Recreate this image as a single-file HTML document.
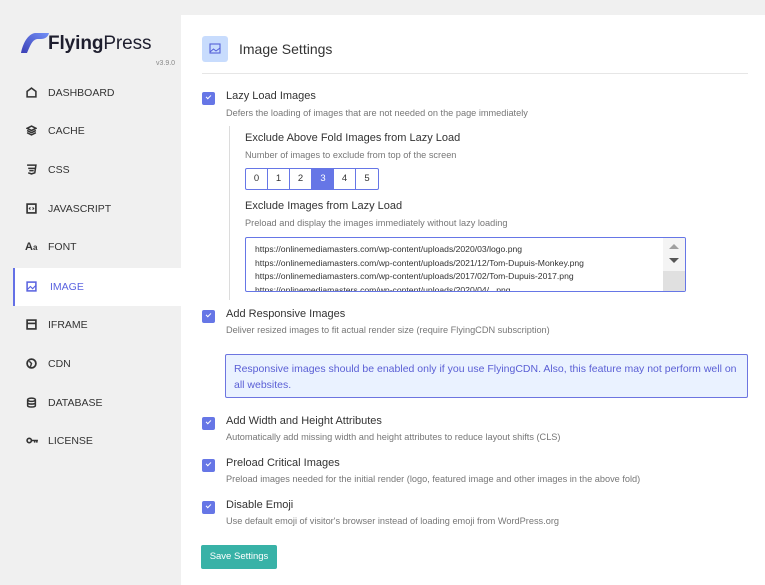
<!DOCTYPE html>
<html><head><style>
*{margin:0;padding:0;box-sizing:border-box}
body{width:765px;height:585px;background:#f0f0f0;font-family:"Liberation Sans",sans-serif;position:relative;overflow:hidden;color:#333}
.a{position:absolute;white-space:nowrap}
.nav{position:absolute;left:13px;width:168px;height:38px;font-size:10.5px;color:#333;display:flex;align-items:center;padding-left:35px}
.nav svg{position:absolute;left:13px;top:13px}
.panel{position:absolute;left:181px;top:15px;right:0;bottom:0;background:#fff}
.cb{position:absolute;left:202px;width:13px;height:13px;background:#6676e6;border-radius:2px}
.cb:after{content:"";position:absolute;left:4px;top:3px;width:4px;height:2px;border-left:1.3px solid #fff;border-bottom:1.3px solid #fff;transform:rotate(-45deg)}
.t{font-size:11px;color:#333}
.d{font-size:9.2px;color:#777}
</style></head><body>
<svg class="a" style="left:20px;top:32px" width="30" height="22" viewBox="0 0 30 22"><defs><linearGradient id="g" x1="0" y1="1" x2="1" y2="0"><stop offset="0" stop-color="#3b3fb5"/><stop offset="1" stop-color="#7390f7"/></linearGradient></defs><path d="M1 21 C3 11 8 2 15 1 L29 1 C28 5 25 7 21 7 L17 7 C12 8 10 14 7 21 Z" fill="url(#g)"/></svg>
<div class="a" style="left:48px;top:33px;font-size:19px;color:#1e1e2e;letter-spacing:-0.1px"><b>Flying</b>Press</div>
<div class="a" style="left:156px;top:60px;font-size:7px;color:#888">v3.9.0</div>
<div class="nav" style="top:74px"><svg width="11" height="11" viewBox="0 0 10 10"><path d="M1 9V4L5 1L9 4V9Z" fill="none" stroke="#333" stroke-width="1.4"/></svg>DASHBOARD</div>
<div class="nav" style="top:112px"><svg width="11" height="11" viewBox="0 0 10 10"><path d="M5 1L9 3L5 5L1 3ZM1 5L5 7L9 5M1 7L5 9L9 7" fill="none" stroke="#333" stroke-width="1.4"/></svg>CACHE</div>
<div class="nav" style="top:151px"><svg width="11" height="11" viewBox="0 0 10 10"><path d="M1 1H9L8 8L5 9L2 8M2 4H8M3 6H7" fill="none" stroke="#333" stroke-width="1.4"/></svg>CSS</div>
<div class="nav" style="top:190px"><svg width="11" height="11" viewBox="0 0 10 10"><rect x="1" y="1" width="8" height="8" fill="none" stroke="#333" stroke-width="1.5"/><path d="M4 4L3 5L4 6M6 4L7 5L6 6" stroke="#333" fill="none"/></svg>JAVASCRIPT</div>
<div class="nav" style="top:228px"><span style="position:absolute;left:12px;font-size:11px;font-weight:bold;color:#333">A<span style="font-size:8px">a</span></span>FONT</div>
<div class="nav" style="top:268px;background:#fff;border-left:2px solid #6470e6;color:#5a63e0"><svg width="11" height="11" viewBox="0 0 10 10" style="left:11px"><rect x="1" y="1" width="8" height="8" fill="none" stroke="#5a63e0" stroke-width="1.4"/><path d="M1 8L4 5L6 7L9 4" stroke="#5a63e0" fill="none"/></svg>IMAGE</div>
<div class="nav" style="top:306px"><svg width="11" height="11" viewBox="0 0 10 10"><rect x="1" y="1" width="8" height="8" fill="none" stroke="#333" stroke-width="1.5"/><path d="M1 4H9" stroke="#333" stroke-width="1.5"/></svg>IFRAME</div>
<div class="nav" style="top:345px"><svg width="11" height="11" viewBox="0 0 10 10"><circle cx="5" cy="5" r="4" fill="none" stroke="#333" stroke-width="1.6"/><path d="M3 3L5 5L4 8" stroke="#333" fill="none" stroke-width="1.3"/></svg>CDN</div>
<div class="nav" style="top:384px"><svg width="11" height="11" viewBox="0 0 10 10"><ellipse cx="5" cy="2.5" rx="3.5" ry="1.5" fill="none" stroke="#333" stroke-width="1.4"/><path d="M1.5 2.5V8C1.5 9.5 8.5 9.5 8.5 8V2.5M1.5 5.3C1.5 6.8 8.5 6.8 8.5 5.3" fill="none" stroke="#333" stroke-width="1.4"/></svg>DATABASE</div>
<div class="nav" style="top:422px"><svg width="13" height="11" viewBox="0 0 12 10"><circle cx="3" cy="5" r="2" fill="none" stroke="#333" stroke-width="1.5"/><path d="M5 5H11M8 5V7M10 5V7" stroke="#333" stroke-width="1.4"/></svg>LICENSE</div>

<div class="panel"></div>
<div class="a" style="left:202px;top:36px;width:26px;height:26px;background:#c8dcfd;border-radius:3px"><svg style="position:absolute;left:7px;top:7px" width="12" height="12" viewBox="0 0 12 12"><rect x="1" y="1" width="10" height="9" fill="none" stroke="#5560d8" stroke-width="1.1"/><path d="M1 9L4.5 6L7 8L11 5" stroke="#5560d8" fill="none"/></svg></div>
<div class="a" style="left:239px;top:41px;font-size:14px;color:#333">Image Settings</div>
<div class="a" style="left:202px;top:73px;width:546px;height:1px;background:#e6e6e6"></div>

<div class="cb" style="top:92px"></div>
<div class="a t" style="left:226px;top:90px">Lazy Load Images</div>
<div class="a d" style="left:226px;top:108px">Defers the loading of images that are not needed on the page immediately</div>
<div class="a" style="left:229px;top:126px;width:1px;height:174px;background:#dcdcdc"></div>
<div class="a t" style="left:245px;top:132px">Exclude Above Fold Images from Lazy Load</div>
<div class="a d" style="left:245px;top:150px">Number of images to exclude from top of the screen</div>
<div class="a" style="left:245px;top:168px;height:22px;display:flex;border:1px solid #6676e6;border-radius:2px;font-size:9.5px">
<span style="width:22px;text-align:center;line-height:20px;border-right:1px solid #6676e6">0</span><span style="width:22px;text-align:center;line-height:20px;border-right:1px solid #6676e6">1</span><span style="width:22px;text-align:center;line-height:20px;border-right:1px solid #6676e6">2</span><span style="width:22px;text-align:center;line-height:20px;background:#6676e6;color:#fff">3</span><span style="width:22px;text-align:center;line-height:20px;border-right:1px solid #6676e6">4</span><span style="width:22px;text-align:center;line-height:20px">5</span></div>
<div class="a t" style="left:245px;top:200px">Exclude Images from Lazy Load</div>
<div class="a d" style="left:245px;top:218px">Preload and display the images immediately without lazy loading</div>
<div class="a" style="left:245px;top:237px;width:441px;height:55px;border:1px solid #6676e6;border-radius:2px;overflow:hidden;font-size:8.6px;line-height:13.5px;padding:5px 0 0 9px;color:#333">https://onlinemediamasters.com/wp-content/uploads/2020/03/logo.png<br>https://onlinemediamasters.com/wp-content/uploads/2021/12/Tom-Dupuis-Monkey.png<br>https://onlinemediamasters.com/wp-content/uploads/2017/02/Tom-Dupuis-2017.png<br>https://onlinemediamasters.com/wp-content/uploads/2020/04/...png
<div style="position:absolute;right:0;top:0;width:22px;height:100%;background:#f4f4f4"><div style="position:absolute;left:6px;top:6px;border:5px solid transparent;border-bottom:5px solid #a0a0a0;border-top:0"></div><div style="position:absolute;left:6px;top:20px;border:5px solid transparent;border-top:5px solid #555;border-bottom:0"></div><div style="position:absolute;bottom:0;width:22px;height:20px;background:#e0e0e0"></div></div></div>

<div class="cb" style="top:310px"></div>
<div class="a t" style="left:226px;top:308px">Add Responsive Images</div>
<div class="a d" style="left:226px;top:325px">Deliver resized images to fit actual render size (require FlyingCDN subscription)</div>
<div class="a" style="left:225px;top:354px;width:523px;height:44px;background:#eaf2ff;border:1px solid #6d75e0;border-radius:2px;font-size:10.5px;color:#5a5fd5;padding:6px 8px;line-height:16px;white-space:normal">Responsive images should be enabled only if you use FlyingCDN. Also, this feature may not perform well on all websites.</div>

<div class="cb" style="top:417px"></div>
<div class="a t" style="left:226px;top:415px">Add Width and Height Attributes</div>
<div class="a d" style="left:226px;top:432px">Automatically add missing width and height attributes to reduce layout shifts (CLS)</div>
<div class="cb" style="top:459px"></div>
<div class="a t" style="left:226px;top:457px">Preload Critical Images</div>
<div class="a d" style="left:226px;top:474px">Preload images needed for the initial render (logo, featured image and other images in the above fold)</div>
<div class="cb" style="top:501px"></div>
<div class="a t" style="left:226px;top:499px">Disable Emoji</div>
<div class="a d" style="left:226px;top:516px">Use default emoji of visitor's browser instead of loading emoji from WordPress.org</div>
<div class="a" style="left:201px;top:545px;width:76px;height:24px;background:#38b2a7;border-radius:2px;color:#fff;font-size:9.5px;text-align:center;line-height:24px">Save Settings</div>
</body></html>
